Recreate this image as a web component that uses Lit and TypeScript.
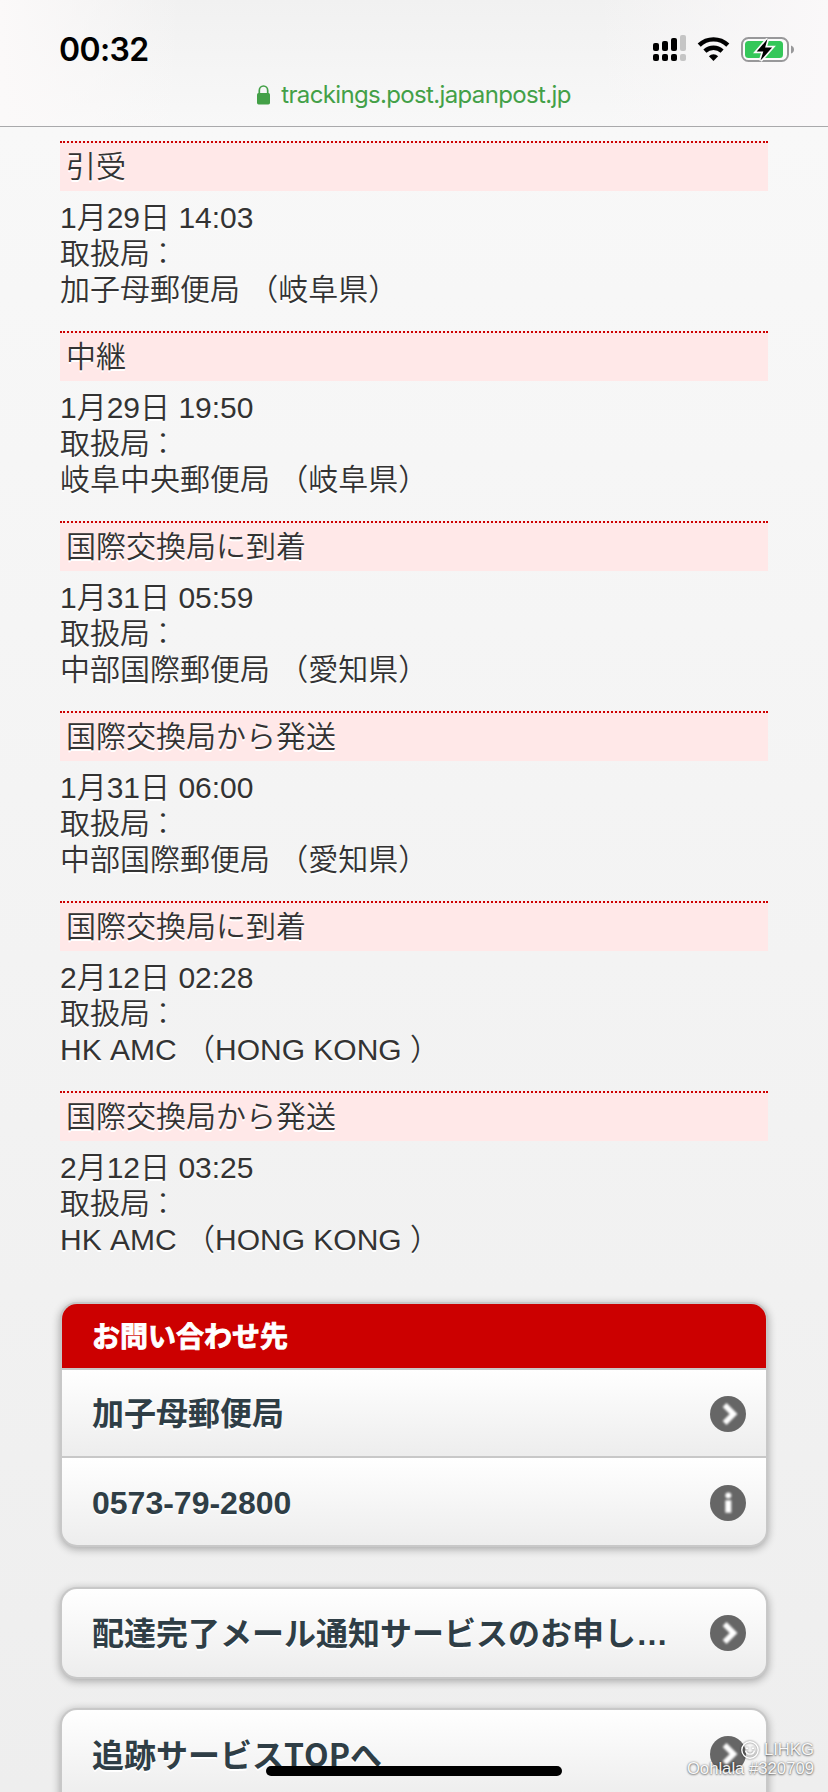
import { LitElement, html, css, svg } from "lit";
import { customElement, property } from "lit/decorators.js";

interface TrackingEvent {
  status: string;
  time: string;
  office: string;
}

const EVENTS: TrackingEvent[] = [
  { status: "引受", time: "1月29日 14:03", office: "加子母郵便局 （岐阜県）" },
  { status: "中継", time: "1月29日 19:50", office: "岐阜中央郵便局 （岐阜県）" },
  { status: "国際交換局に到着", time: "1月31日 05:59", office: "中部国際郵便局 （愛知県）" },
  { status: "国際交換局から発送", time: "1月31日 06:00", office: "中部国際郵便局 （愛知県）" },
  { status: "国際交換局に到着", time: "2月12日 02:28", office: "HK AMC （HONG KONG ）" },
  { status: "国際交換局から発送", time: "2月12日 03:25", office: "HK AMC （HONG KONG ）" },
];

@customElement("row-icon")
class RowIcon extends LitElement {
  @property() kind = "arrow";

  static styles = css`
    :host { display: block; width: 36px; height: 36px; flex: none; }
    svg { display: block; overflow: visible; }
    .glyph { filter: blur(0.8px); }
  `;

  render() {
    const glyph =
      this.kind === "info"
        ? svg`<circle cx="18.3" cy="10.5" r="3" fill="#fff"/><path d="M15.3 15.3h6v12.4h-6z" fill="#fff"/>`
        : svg`<path d="M14.6 9l9 9-9 9" fill="none" stroke="#fff" stroke-width="5.4"/>`;
    return html`<svg width="36" height="36" viewBox="0 0 36 36">
      <circle cx="18" cy="18" r="18" fill="#666" />
      <g class="glyph">${glyph}</g>
    </svg>`;
  }
}

@customElement("status-header")
class StatusHeader extends LitElement {
  static styles = css`
    :host {
      display: block;
      box-sizing: border-box;
      height: 127px;
      border-bottom: 1px solid #a9a9ab;
      background: linear-gradient(90deg, #fbf9f9 0, rgba(247, 247, 247, 0) 22%, rgba(247, 247, 247, 0) 72%, #faf8f9 100%),
        linear-gradient(#f1f1f1, #f8f8f8);
      font-family: Inter, "Liberation Sans", sans-serif;
      font-weight: 400;
    }
    .status { display: flex; justify-content: space-between; height: 74px; padding: 0 33px 0 59px; }
    .clock { font-size: 32px; font-weight: 600; line-height: 40px; margin-top: 30px; letter-spacing: -0.65px; color: #000; }
    .indicators { display: block; margin-top: 34px; }
    .address { display: flex; justify-content: center; height: 42px; color: #43a047; }
    .lock { margin: 11px 11px 0 0; }
    .host { font-size: 24px; line-height: 30px; margin-top: 6px; letter-spacing: -0.65px; white-space: nowrap; }
  `;

  render() {
    return html`
      <div class="status">
        <span class="clock">00:32</span>
        <svg class="indicators" width="143" height="30" viewBox="652 34 143 30">
          <g fill="#000">
            <rect x="653" y="43" width="6" height="8" rx="2" />
            <rect x="662" y="41" width="6" height="10" rx="2" />
            <rect x="671" y="38" width="6" height="13" rx="2" />
            <rect x="653" y="54" width="6" height="7" rx="2" />
            <rect x="662" y="54" width="6" height="7" rx="2" />
            <rect x="671" y="54" width="6" height="7" rx="2" />
          </g>
          <g fill="#c5c5c5">
            <rect x="680" y="35" width="6" height="16" rx="2" />
            <rect x="680" y="54" width="6" height="7" rx="2" />
          </g>
          <path d="M699.2 45.2A20.5 20.5 0 0 1 727.8 45.2" fill="none" stroke="#000" stroke-width="4.4" />
          <path d="M704.9 51.2A12.4 12.4 0 0 1 722.1 51.2" fill="none" stroke="#000" stroke-width="4.4" />
          <path d="M713.5 61l-4.6-4.8a6.6 6.6 0 0 1 9.2 0z" />
          <rect x="742" y="38" width="46" height="23" rx="6.5" fill="#fbfbfb" stroke="#98989a" stroke-width="2" />
          <rect x="745" y="41" width="38" height="17" rx="3.5" fill="#34c759" />
          <path d="M791 45.5q3 1 3 4t-3 4z" fill="#98989a" />
          <path
            d="M767.5 39l-10.8 12.6h6.6l-2.8 9 11.6-13.1h-7z"
            fill="#000"
            stroke="#fbfbfb"
            stroke-width="3.4"
            paint-order="stroke"
          />
        </svg>
      </div>
      <div class="address">
        <svg class="lock" width="13" height="20" viewBox="0 0 13 20">
          <rect x="0" y="8" width="13" height="11.4" rx="1.6" fill="#43a047" />
          <path d="M2.3 9V5.6a4.2 4.6 0 0 1 8.4 0V9" fill="none" stroke="#43a047" stroke-width="1.7" />
        </svg>
        <span class="host">trackings.post.japanpost.jp</span>
      </div>
    `;
  }
}

@customElement("tracking-entry")
class TrackingEntry extends LitElement {
  @property({ attribute: false }) entry!: TrackingEvent;

  static styles = css`
    :host { display: block; height: 190px; }
    .bar {
      box-sizing: border-box;
      height: 50px;
      padding-left: 6px;
      line-height: 47px;
      background: #ffe8e8;
      border-top: 2px dotted #c00;
    }
    .detail { padding-top: 9px; line-height: 36px; }
    .line { height: 36px; white-space: pre; }
    .colon { font-weight: 300; margin-left: -2px; }
  `;

  render() {
    const e = this.entry;
    return html`
      <div class="bar">${e.status}</div>
      <div class="detail">
        <div class="line">${e.time}</div>
        <div class="line">取扱局<span class="colon">：</span></div>
        <div class="line">${e.office}</div>
      </div>
    `;
  }
}

@customElement("app-root")
class AppRoot extends LitElement {
  static styles = css`
    :host {
      display: block;
      position: relative;
      box-sizing: border-box;
      width: 828px;
      height: 1792px;
      overflow: hidden;
      background: linear-gradient(#f8f8f8 127px, #eee 1792px);
      font-family: "Liberation Sans", "Noto Sans CJK JP", sans-serif;
      font-size: 30px;
      font-weight: 350;
      font-kerning: none;
      color: #333;
      text-shadow: 0 2px 0 #fff;
    }
    status-header { text-shadow: none; font-kerning: auto; }
    .page { padding: 14px 60px 0; }
    .card {
      box-sizing: border-box;
      border: 2px solid #c8c8c8;
      border-radius: 17px;
      overflow: hidden;
      box-shadow: 0 2px 8px rgba(0, 0, 0, 0.32);
      font-size: 32px;
      font-weight: 700;
      color: #2f3e46;
      background: #c8c8c8;
    }
    .contact { margin-top: 21px; height: 245px; display: grid; grid-template-rows: 64px 86px 87px; gap: 2px; }
    .title { background: #c00; color: #fff; font-size: 28px; line-height: 67px; height: 64px; padding-left: 30px; text-shadow: none; -webkit-text-stroke: 0.9px #fff; }
    .row {
      display: flex;
      align-items: center;
      justify-content: space-between;
      padding: 0 20px 0 30px;
      background: linear-gradient(#fff, #ededed);
      white-space: nowrap;
      line-height: 48px;
    }
    .row > span { margin-top: 2px; }
    .row row-icon { margin-top: 2px; }
    .single { height: 92px; margin-top: 40px; }
    .single .row { height: 88px; box-sizing: border-box; }
    .single .row > span { margin-top: 1px; }
    .single .row row-icon { margin-top: 0; }
    .last { margin-top: 29px; height: 140px; }
    .latin { font-family: "Noto Sans CJK JP", sans-serif; }
    .home-indicator { position: absolute; left: 266px; top: 1766px; width: 296px; height: 10px; border-radius: 5px; background: #000; }
    .watermark {
      position: absolute;
      right: 14px;
      top: 1740px;
      display: flex;
      flex-direction: column;
      align-items: flex-end;
      font-size: 16.7px;
      font-weight: 400;
      line-height: 19px;
      color: rgba(255, 255, 255, 0.95);
      text-shadow: 0 0 2px rgba(0, 0, 0, 0.5), 0 1px 2px rgba(0, 0, 0, 0.4);
    }
    .brand { display: flex; gap: 5px; align-items: center; }
    .brand svg { filter: drop-shadow(0 0 1px rgba(0, 0, 0, 0.6)); overflow: visible; }
  `;

  render() {
    return html`
      <status-header></status-header>
      <main class="page" lang="ja">
        ${EVENTS.map((e) => html`<tracking-entry .entry=${e}></tracking-entry>`)}
        <section class="card contact">
          <div class="title">お問い合わせ先</div>
          <div class="row"><span>加子母郵便局</span><row-icon></row-icon></div>
          <div class="row"><span>0573-79-2800</span><row-icon kind="info"></row-icon></div>
        </section>
        <section class="card single">
          <div class="row"><span>配達完了メール通知サービスのお申し…</span><row-icon></row-icon></div>
        </section>
        <section class="card single last">
          <div class="row"><span>追跡サービス<span class="latin">TOP</span>へ</span><row-icon></row-icon></div>
        </section>
      </main>
      <div class="home-indicator"></div>
      <div class="watermark">
        <div class="brand">
          <svg width="18" height="18" viewBox="0 0 18 18" fill="none" stroke="#fff" stroke-width="1.4">
            <circle cx="9" cy="9" r="8.2" />
            <path d="M4.5 9.5a4.6 4.6 0 0 0 9 0M5 7.2h2.2M10.8 7.2H13" />
          </svg>
          <span>LIHKG</span>
        </div>
        <span>Oohlala #320709</span>
      </div>
    `;
  }
}
